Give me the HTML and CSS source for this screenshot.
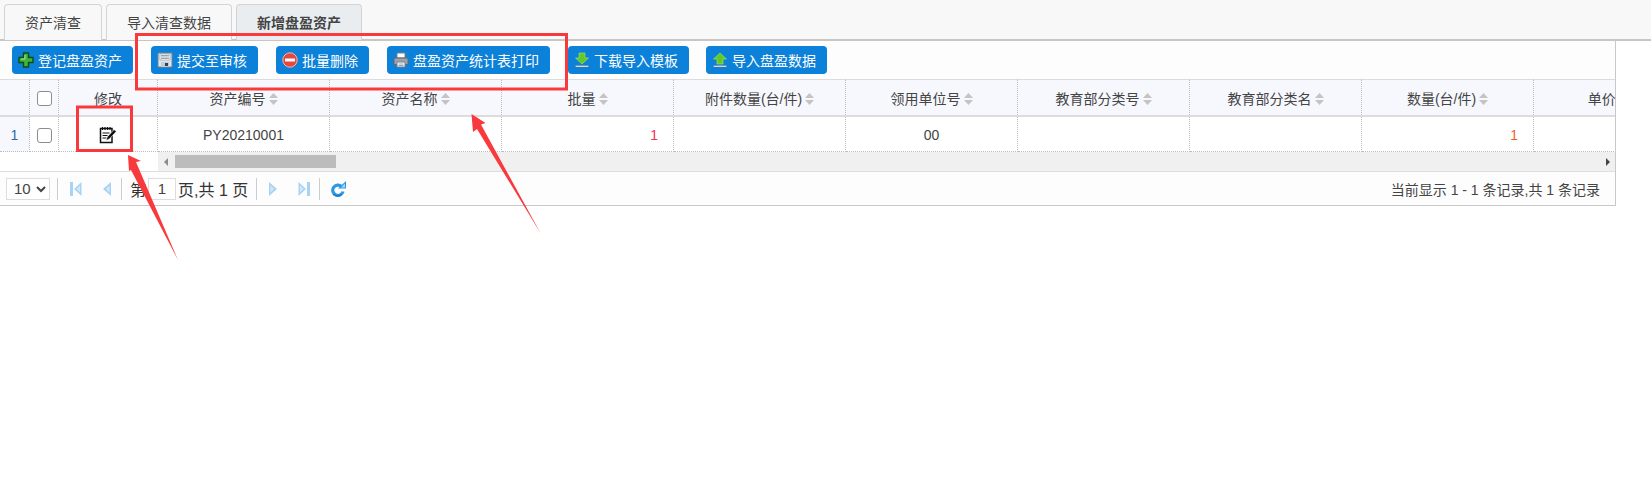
FILE: index.html
```html
<!DOCTYPE html>
<html lang="zh-CN">
<head>
<meta charset="utf-8">
<title>新增盘盈资产</title>
<link rel="stylesheet" href="styles.css">
</head>
<body>
<svg class="defs" width="0" height="0" aria-hidden="true">
  <symbol id="sort" viewBox="0 0 9 14"><path d="M4.500 1 9 6H0zM0 8h9l-4.500 5z" fill="#c4c4c4"/></symbol>
  <symbol id="first" viewBox="0 0 12 14"><path d="M0 0h3v14H0z" fill="#a8d3f3"/><path d="M11.500 0v14L4 7z" fill="#a8d3f3"/><path d="M10 3.500v7L6.500 7z" fill="#d3e9fa"/></symbol>
  <symbol id="prev" viewBox="0 0 12 14"><path d="M10 0v14L2 7z" fill="#a8d3f3"/><path d="M8.500 3.500v7L5 7z" fill="#d3e9fa"/></symbol>
  <symbol id="next" viewBox="0 0 12 14"><path d="M2 0v14l8-7z" fill="#a8d3f3"/><path d="M3.500 3.500v7L7 7z" fill="#d3e9fa"/></symbol>
  <symbol id="last" viewBox="0 0 12 14"><path d="M9 0h3v14H9z" fill="#a8d3f3"/><path d="M.5 0v14L8 7z" fill="#a8d3f3"/><path d="M2 3.500v7L5.500 7z" fill="#d3e9fa"/></symbol>
</svg>

<nav class="tabs">
  <a class="tab">资产清查</a>
  <a class="tab">导入清查数据</a>
  <a class="tab active">新增盘盈资产</a>
</nav>

<section class="panel">
  <div class="toolbar">
    <button class="btn"><svg class="ico" viewBox="0 0 16 16"><path d="M5.500 1h5v4.500H15v5h-4.500V15h-5v-4.500H1v-5h4.500z" fill="#3fb53c" stroke="#0c4d12" stroke-width="1.400"/><path d="M7 3v4H3" fill="none" stroke="#a5eda0"/></svg>登记盘盈资产</button>
    <button class="btn"><svg class="ico" viewBox="0 0 16 16"><path d="M1 1h14v14H1z" fill="#d9e6f3" stroke="#76808c"/><path d="M3 2h10v6H3z" fill="#fff" stroke="#8a95a2" stroke-width=".6"/><path d="M4 3.500h8M4 5h8M4 6.500h8" stroke="#9aa5b2"/><path d="M4 10h8v5H4z" fill="#c3ccd5"/><path d="M8 11h3v3H8z" fill="#39424c"/></svg>提交至审核</button>
    <button class="btn"><svg class="ico" viewBox="0 0 16 16"><circle cx="8" cy="8" r="7.200" fill="#e8453c" stroke="#f6b7a5"/><path d="M3 6.500h10v3H3z" fill="#fff"/></svg>批量删除</button>
    <button class="btn"><svg class="ico" viewBox="0 0 16 16"><path d="M4 1h8v5H4z" fill="#fff" stroke="#77818c"/><path d="M1 6h14v6.500H1z" fill="#9aa3ad" stroke="#5f6973"/><path d="M4 10h8v5H4z" fill="#fff" stroke="#77818c"/><path d="M5.500 12h5M5.500 13.500h5" stroke="#9aa3ad"/></svg>盘盈资产统计表打印</button>
    <button class="btn"><svg class="ico" viewBox="0 0 16 16"><path d="M5 1h6v5h3.500L8 12 1.500 6H5z" fill="#5fc92a" stroke="#b5e84e" stroke-width=".6"/><path d="M1.500 13.500h13V15h-13z" fill="#fff" stroke="#5d6b76" stroke-width=".5"/></svg>下载导入模板</button>
    <button class="btn"><svg class="ico" viewBox="0 0 16 16"><path d="M5 12V7H1.500L8 1l6.500 6H11v5z" fill="#5fc92a" stroke="#b5e84e" stroke-width=".6"/><path d="M1.500 13.500h13V15h-13z" fill="#fff" stroke="#5d6b76" stroke-width=".5"/></svg>导入盘盈数据</button>
  </div>

  <div class="table-wrap">
    <table class="grid">
      <colgroup>
        <col class="c-row"><col class="c-check"><col class="c-edit">
        <col class="c-data"><col class="c-data"><col class="c-data"><col class="c-data"><col class="c-data"><col class="c-data"><col class="c-data"><col class="c-data"><col class="c-data">
      </colgroup>
      <thead>
        <tr>
          <th></th>
          <th><span class="check"></span></th>
          <th>修改</th>
          <th>资产编号<svg class="sort"><use href="#sort"/></svg></th>
          <th>资产名称<svg class="sort"><use href="#sort"/></svg></th>
          <th>批量<svg class="sort"><use href="#sort"/></svg></th>
          <th>附件数量(台/件)<svg class="sort"><use href="#sort"/></svg></th>
          <th>领用单位号<svg class="sort"><use href="#sort"/></svg></th>
          <th>教育部分类号<svg class="sort"><use href="#sort"/></svg></th>
          <th>教育部分类名<svg class="sort"><use href="#sort"/></svg></th>
          <th>数量(台/件)<svg class="sort"><use href="#sort"/></svg></th>
          <th>单价(元)<svg class="sort"><use href="#sort"/></svg></th>
        </tr>
      </thead>
      <tbody>
        <tr>
          <td class="rownum">1</td>
          <td><span class="check"></span></td>
          <td><svg class="edit" viewBox="0 0 18 18"><path d="M1.500 2.500h11.500v14H1.500z" fill="#fff" stroke="#111" stroke-width="1.500"/><path d="M3.500 1v3M6 1v3M8.500 1v3M11 1v3" stroke="#111" stroke-width="1.200"/><path d="M3.500 7h7M3.500 9.500h5M3.500 12h4" stroke="#111" stroke-width="1.100"/><path d="M15 3.500l2.300 2-7 7.500-3.300 1.500 1.200-3.500z" fill="#111" stroke="#fff" stroke-width=".6"/></svg></td>
          <td>PY20210001</td>
          <td></td>
          <td class="num red">1</td>
          <td></td>
          <td>00</td>
          <td></td>
          <td></td>
          <td class="num orange">1</td>
          <td></td>
        </tr>
      </tbody>
    </table>
  </div>

  <div class="hscroll">
    <div class="hscroll-gap"></div>
    <div class="hscroll-track">
      <span class="arrow-left"></span>
      <span class="thumb"></span>
      <span class="arrow-right"></span>
    </div>
  </div>

  <footer class="pager">
    <select class="size"><option>10</option></select>
    <span class="sep"></span>
    <svg class="pg first"><use href="#first"/></svg>
    <svg class="pg prev"><use href="#prev"/></svg>
    <span class="sep"></span>
    <span class="pg-text">第</span>
    <input class="page-input" value="1">
    <span class="pg-text">页,共 1 页</span>
    <span class="sep"></span>
    <svg class="pg next"><use href="#next"/></svg>
    <svg class="pg last"><use href="#last"/></svg>
    <span class="sep"></span>
    <svg class="refresh" viewBox="0 0 16 16"><path d="M11.500 5.500A5.200 5.200 0 1 0 13 10.500" fill="none" stroke="#2f97e4" stroke-width="3.200"/><path d="M8 7.500h8V0z" fill="#2f97e4"/><path d="M11 6.500 15 2.500v4z" fill="#a5dbf8"/><path d="M3 13.500q4.500 3 9 0" fill="none" stroke="#1272bd" stroke-width="1"/></svg>
    <span class="info">当前显示 1 - 1 条记录,共 1 条记录</span>
  </footer>
</section>

<svg class="notes" viewBox="0 0 1651 489" aria-hidden="true">
  <path d="M136.500 34.500H566.500V89H136.500z" fill="none" stroke="#f93a3d" stroke-width="3"/>
  <path d="M77.500 107H131.500V150.500H77.500z" fill="none" stroke="#f93a3d" stroke-width="3"/>
  <path d="M128 155 141 161 136 162 178 260 131 170 129 171z" fill="#f93a3d"/>
  <path d="M471.500 114 485.500 123 481 124.500 541 234 477 129 473 132z" fill="#f93a3d"/>
</svg>
</body>
</html>
```
FILE: styles.css
```css
* { box-sizing: border-box; }
html, body { margin: 0; padding: 0; background: #fff; }
body {
  position: relative;
  height: 489px;
  overflow: hidden;
  font-family: "Liberation Sans", "Noto Sans CJK SC", sans-serif;
  font-size: 14px;
  color: #444;
}
.defs { position: absolute; }

.tabs {
  display: flex;
  align-items: flex-end;
  gap: 4px;
  height: 41px;
  padding-left: 4px;
  background: #f8f8f8;
  border-bottom: 2px solid #c6c6c6;
}
.tab {
  display: flex;
  align-items: center;
  justify-content: center;
  height: 36px;
  margin-bottom: -1px;
  padding-bottom: 2px;
  width: 98px;
  background: #f8f8f8;
  border: 1px solid #d4d4d4;
  border-bottom: none;
  border-radius: 4px 4px 0 0;
  color: #444;
}
.tab:nth-child(2) { width: 126px; }
.tab.active { width: 126px; background: #eaedf0; font-weight: 700; }

.panel {
  width: 1616px;
  height: 165px;
  display: flex;
  flex-direction: column;
  background: #fdfdfd;
  border-right: 1px solid #c8c8c8;
  border-bottom: 1px solid #c8c8c8;
}

.toolbar {
  display: flex;
  align-items: flex-start;
  gap: 18px;
  height: 38px;
  padding: 5px 0 0 12px;
}
.btn {
  display: flex;
  align-items: center;
  gap: 4px;
  height: 28px;
  padding: 0 11px 0 6px;
  border: none;
  border-radius: 4px;
  background: #0b81d9;
  color: #fff;
  font: inherit;
}
.btn:last-child { margin-left: -1px; }
.ico { width: 16px; height: 16px; flex: none; }

.table-wrap { height: 73px; overflow: hidden; }
.grid {
  table-layout: fixed;
  border-collapse: separate;
  border-spacing: 0;
  width: 1706px;
  background: #fff;
}
.c-row { width: 30px; }
.c-check { width: 29px; }
.c-edit { width: 99px; }
.c-data { width: 172px; }
.grid th, .grid td {
  padding: 0;
  text-align: center;
  white-space: nowrap;
  font-weight: 400;
  border-right: 1px dotted #bdbdbd;
}
.grid th {
  height: 38px;
  background: #f7f8fe;
  border-top: 1px solid #dcdcdc;
  border-bottom: 2px solid #dcdcdc;
}
.grid td {
  height: 35px;
  padding-top: 1px;
  border-bottom: 1px dotted #bdbdbd;
}
.grid .rownum { background: #f7f8fe; color: #2f6a9e; }
.grid .num { text-align: right; padding-right: 15px; }
.red { color: #f5334a; }
.orange { color: #f2601c; }
.check {
  display: inline-block;
  width: 15px;
  height: 15px;
  vertical-align: middle;
  background: #fff;
  border: 1px solid #8d8d8d;
  border-radius: 3px;
}
.sort { width: 9px; height: 14px; margin-left: 3px; vertical-align: -2px; }
.edit { width: 18px; height: 18px; vertical-align: middle; }

.hscroll { display: flex; height: 19px; background: #fff; }
.hscroll-gap { width: 158px; flex: none; }
.hscroll-track {
  flex: 1;
  display: flex;
  align-items: center;
  background: #f0f0f0;
}
.arrow-left {
  margin-left: 6px;
  border: 4px solid transparent;
  border-left: none;
  border-right: 4px solid #8c8c8c;
}
.thumb { width: 161px; height: 13px; margin-left: 7px; background: #bcbcbc; }
.arrow-right {
  margin-left: auto;
  margin-right: 5px;
  border: 4px solid transparent;
  border-right: none;
  border-left: 4px solid #444;
}

.pager {
  flex: 1;
  display: flex;
  align-items: center;
  padding: 0 15px 0 6px;
  border-top: 1px solid #dedede;
  color: #444;
}
.size {
  width: 44px;
  height: 22px;
  padding: 0 0 0 3px;
  background: #fff;
  border: 1px solid #ddd;
  font: 15px "Liberation Sans", sans-serif;
  color: #444;
}
.sep { width: 1px; height: 22px; background: #ccc; flex: none; }
.pager > .size + .sep { margin-left: 7px; }
.pg { width: 12px; height: 14px; flex: none; }
.pg.first { margin-left: 12px; }
.pg.prev { margin: 0 8px 0 19px; }
.pg.next { margin-left: 10px; }
.pg.last { margin: 0 9px 0 19px; }
.pg-text { font-size: 16px; color: #333; white-space: nowrap; }
.sep + .pg-text { margin-left: 8px; }
.page-input {
  width: 28px;
  height: 22px;
  margin: 0 2px;
  padding: 0;
  text-align: center;
  background: #fff;
  border: 1px solid #ddd;
  font: 15px "Liberation Sans", sans-serif;
  color: #444;
}
.page-input + .pg-text { margin-right: 8px; }
.refresh { width: 16px; height: 16px; margin-left: 10px; flex: none; }
.info { margin-left: auto; color: #444; }

.notes {
  position: absolute;
  left: 0;
  top: 0;
  width: 1651px;
  height: 489px;
  pointer-events: none;
}
```
